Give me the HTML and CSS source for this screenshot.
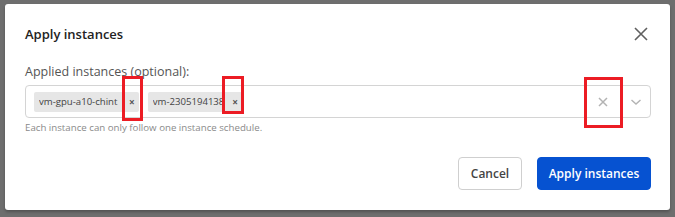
FILE: index.html
```html
<!DOCTYPE html>
<html>
<head>
<meta charset="utf-8">
<link rel="stylesheet" href="styles.css">
</head>
<body>
<div class="backdrop">
  <div class="dialog">
    <div class="header">
      <h2 class="title">Apply instances</h2>
      <button class="close" aria-label="Close">
        <svg width="14" height="14" viewBox="0 0 14 14"><path d="M1 1L13 13M13 1L1 13" stroke="#5f5f5f" stroke-width="1.6" fill="none"/></svg>
      </button>
    </div>
    <div class="label">Applied instances (optional):</div>
    <div class="select">
      <div class="chips">
        <span class="chip"><span class="chip-text chip-text-clip">vm-gpu-a10-chint</span><span class="chip-x">×</span></span>
        <span class="chip"><span class="chip-text">vm-2305194138</span><span class="chip-x">×</span></span>
      </div>
      <div class="indicators">
        <span class="clear">
          <svg width="10" height="10" viewBox="0 0 10 10"><path d="M1 1L9 9M9 1L1 9" stroke="#b3b3b3" stroke-width="1.5" fill="none"/></svg>
        </span>
        <span class="chevron">
          <svg width="12" height="8" viewBox="0 0 12 8"><path d="M1.5 2L6 6L10.5 2" stroke="#b3b3b3" stroke-width="1.4" fill="none"/></svg>
        </span>
      </div>
    </div>
    <div class="help">Each instance can only follow one instance schedule.</div>
    <div class="footer">
      <button class="btn btn-cancel">Cancel</button>
      <button class="btn btn-primary">Apply instances</button>
    </div>
  </div>
</div>
<div class="mark mark-1"></div>
<div class="mark mark-2"></div>
<div class="mark mark-3"></div>
</body>
</html>
```
FILE: styles.css
```css
* { box-sizing: border-box; }
html, body { margin: 0; padding: 0; }
body {
  width: 675px;
  height: 217px;
  overflow: hidden;
  background: #6e6e6e;
  font-family: "Open Sans", "Noto Sans", sans-serif;
  position: relative;
}
.backdrop {
  padding: 4px 0 0 5px;
}
.dialog {
  width: 665px;
  height: 206px;
  background: #fff;
  border-radius: 3px;
  padding: 0 19px 0 20px;
  display: flex;
  flex-direction: column;
  box-shadow: 0 2px 3px rgba(0,0,0,0.25);
}
.header {
  height: 60px;
  display: flex;
  align-items: center;
  justify-content: space-between;
}
.title {
  margin: 0;
  font-size: 13px;
  font-weight: 600;
  color: #222;
}
.close {
  border: 0;
  background: none;
  padding: 0;
  width: 14px;
  height: 14px;
  display: flex;
  margin-right: 3px;
}
.label {
  font-size: 12.5px;
  line-height: 16px;
  color: #555;
  margin-bottom: 5px;
}
.select {
  height: 33px;
  border: 1px solid #d4d4d4;
  border-radius: 4px;
  display: flex;
  align-items: center;
  justify-content: space-between;
  padding: 0 8px;
}
.chips {
  display: flex;
  gap: 9px;
  align-items: center;
}
.chip {
  display: flex;
  align-items: center;
  height: 20px;
  background: #e6e6e6;
  border-radius: 2px;
  padding: 0 4px 0 5px;
  font-size: 9.6px;
  color: #444;
}
.chip-text {
  white-space: nowrap;
  overflow: hidden;
}
.chip-text-clip {
  width: 82px;
}
.chip-x {
  margin-left: 8px;
  font-size: 10px;
  font-weight: 700;
  color: #555;
}
.indicators {
  display: flex;
  align-items: center;
  gap: 22px;
  margin-right: 0;
}
.clear, .chevron {
  display: flex;
}
.help {
  margin-top: 3px;
  font-size: 9.7px;
  line-height: 14px;
  color: #8a8a8a;
}
.footer {
  margin-top: 22px;
  display: flex;
  justify-content: flex-end;
  gap: 15px;
  padding-right: 0;
}
.btn {
  height: 33px;
  border-radius: 4px;
  font-family: "Open Sans", "Noto Sans", sans-serif;
  font-size: 12px;
  font-weight: 600;
  padding: 0;
  white-space: nowrap;
}
.btn-cancel {
  background: #fff;
  border: 1px solid #cfcfcf;
  color: #444;
  width: 64px;
}
.btn-primary {
  background: #0652d1;
  border: 1px solid #0652d1;
  color: #fff;
  width: 114px;
}
.mark {
  position: absolute;
  border: 3px solid #ec1c24;
}
.mark-1 { left: 122px; top: 76px; width: 21px; height: 45px; }
.mark-2 { left: 222px; top: 76px; width: 22px; height: 38px; }
.mark-3 { left: 584px; top: 77px; width: 39px; height: 51px; }
```
